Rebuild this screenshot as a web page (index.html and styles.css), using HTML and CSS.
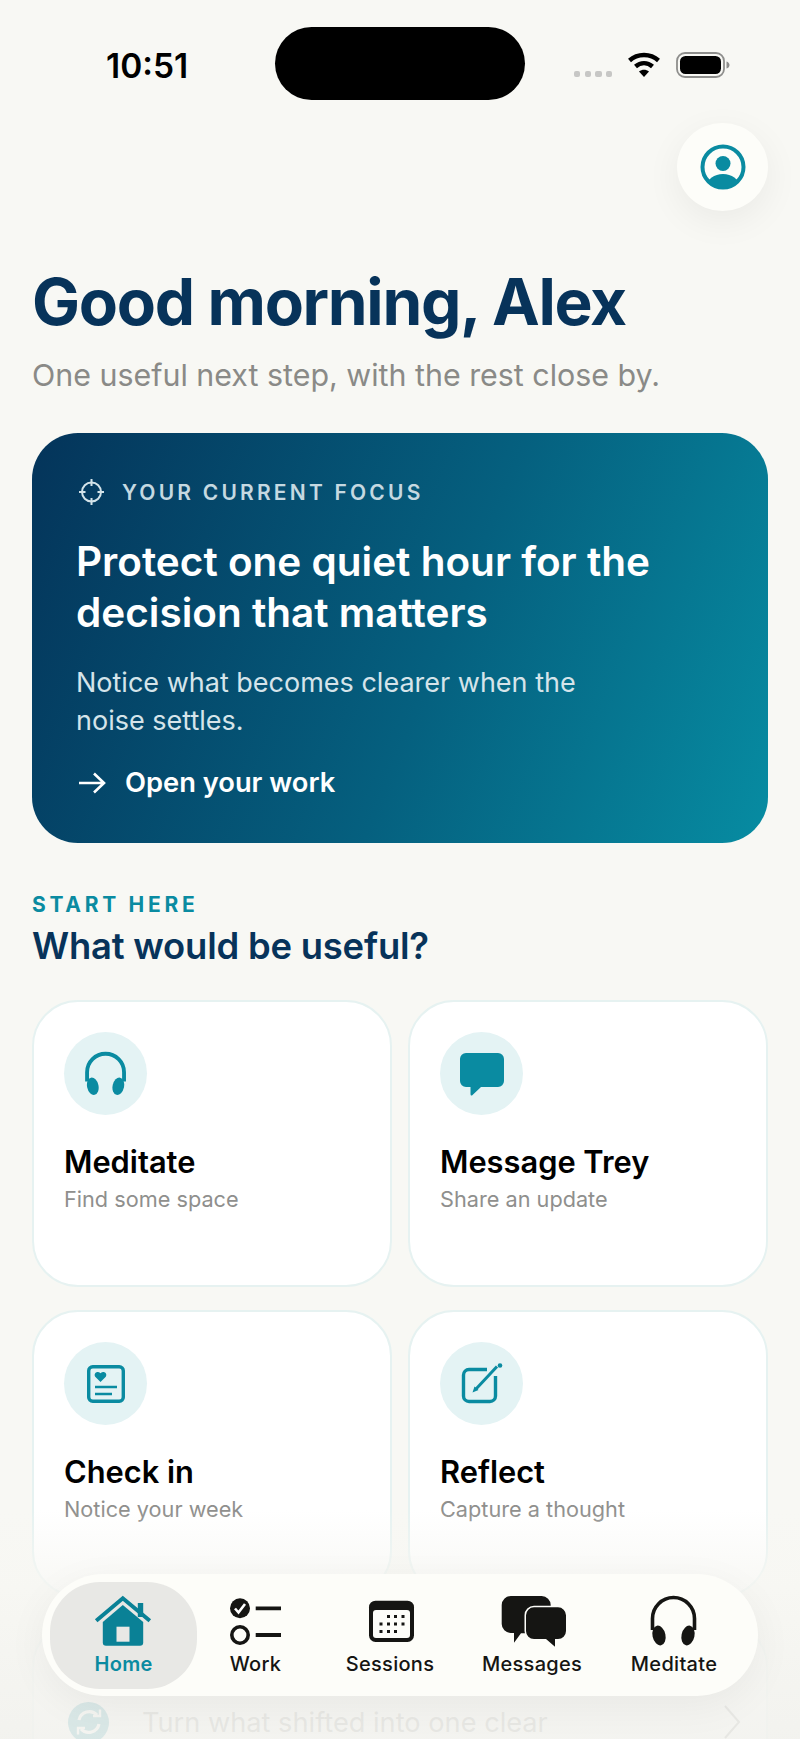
FILE: index.html
```html
<!DOCTYPE html>
<html lang="en">

<head>
    <meta charset="UTF-8">
    <meta name="viewport" content="width=device-width, initial-scale=1.0">
    <title>Home</title>
    <link rel="stylesheet" href="styles.css">
</head>

<body>
    <div class="screen">
        <header class="status">
            <div class="time">10:51</div>
            <div class="island"></div>
            <div class="status-icons">
                <div class="dots"><i></i><i></i><i></i><i></i></div>
                <svg class="wifi" width="34" height="26" viewBox="0 0 34 26">
                    <path d="M2.5 8.5C10.5 1.2 23.5 1.2 31.5 8.5" fill="none" stroke="#000" stroke-width="4.4" />
                    <path d="M8.5 14.5C13.5 10 20.5 10 25.5 14.5" fill="none" stroke="#000" stroke-width="4.4" />
                    <path d="M12 19.5C15 17 19 17 22 19.5L17 25Z" fill="#000" />
                </svg>
                <svg class="battery" width="54" height="26" viewBox="0 0 54 26">
                    <rect x="1" y="1" width="47" height="24" rx="8" fill="none" stroke="#8e8e8c" stroke-width="1.8" />
                    <rect x="4" y="4" width="41" height="18" rx="5.5" fill="#000" />
                    <path d="M50.5 9.5C52.5 10 53.5 11.5 53.5 13S52.5 16 50.5 16.5Z" fill="#8e8e8c" />
                </svg>
            </div>
        </header>

        <div class="topbar">
            <button class="profile">
                <svg width="46" height="46" viewBox="0 0 46 46">
                    <defs>
                        <clipPath id="ring"><circle cx="23" cy="23" r="21" /></clipPath>
                    </defs>
                    <circle cx="23" cy="23" r="20.5" fill="none" stroke="#0a8ba1" stroke-width="4" />
                    <circle cx="23" cy="19.5" r="7.5" fill="#0a8ba1" />
                    <ellipse cx="23" cy="42" rx="16" ry="12" fill="#0a8ba1" clip-path="url(#ring)" />
                </svg>
            </button>
        </div>

        <main class="content">
            <h1>Good morning, Alex</h1>
            <p class="lead">One useful next step, with the rest close by.</p>

            <section class="hero">
                <div class="hero-label">
                    <svg width="27" height="28" viewBox="0 0 27 28" fill="none" stroke="#d3e3e9" stroke-width="2">
                        <circle cx="13.5" cy="14" r="9.5" />
                        <path d="M13.5 1V8M13.5 20V27M1 14H7.5M19.5 14H26" />
                    </svg>
                    <span>YOUR CURRENT FOCUS</span>
                </div>
                <h2>Protect one quiet hour for the decision that matters</h2>
                <p>Notice what becomes clearer when the noise settles.</p>
                <div class="hero-link">
                    <svg width="28" height="24" viewBox="0 0 28 24" fill="none" stroke="#fff" stroke-width="2.6">
                        <path d="M1 12H26M16 2.5L26 12L16 21.5" />
                    </svg>
                    <span>Open your work</span>
                </div>
            </section>

            <div class="eyebrow">START HERE</div>
            <h3>What would be useful?</h3>

            <div class="cards">
                <div class="card">
                    <div class="card-icon">
                        <svg width="44" height="45" viewBox="0 0 50 50" fill="#0a8ba1">
                            <path d="M3.5 34V23.5a21 21 0 0 1 42 0V34" fill="none" stroke="#0a8ba1" stroke-width="4.4" />
                            <ellipse cx="10" cy="39.5" rx="6.5" ry="10" transform="rotate(-12 10 39.5)" />
                            <ellipse cx="39" cy="39.5" rx="6.5" ry="10" transform="rotate(12 39 39.5)" />
                        </svg>
                    </div>
                    <div class="card-title">Meditate</div>
                    <div class="card-sub">Find some space</div>
                </div>
                <div class="card">
                    <div class="card-icon">
                        <svg width="46" height="44" viewBox="0 0 46 44" fill="#0a8ba1">
                            <path d="M7 1H39A6 6 0 0 1 45 7V29A6 6 0 0 1 39 35H22L13 43.5Q11.5 44 11.5 42V35H7A6 6 0 0 1 1 29V7A6 6 0 0 1 7 1Z" />
                        </svg>
                    </div>
                    <div class="card-title">Message Trey</div>
                    <div class="card-sub">Share an update</div>
                </div>
                <div class="card">
                    <div class="card-icon">
                        <svg width="38" height="38" viewBox="0 0 38 38" fill="none" stroke="#0a8ba1" stroke-width="3.4">
                            <rect x="1.7" y="1.7" width="34.6" height="34.6" rx="4" />
                            <path d="M8 22H30M8 29H25" stroke-width="2.6" />
                            <path d="M13.5 17L8.2 11.8C6.2 8.5 10.3 5.3 13.5 8.3C16.7 5.3 20.8 8.5 18.8 11.8Z" fill="#0a8ba1" stroke="none" />
                        </svg>
                    </div>
                    <div class="card-title">Check in</div>
                    <div class="card-sub">Notice your week</div>
                </div>
                <div class="card">
                    <div class="card-icon">
                        <svg width="42" height="42" viewBox="0 0 42 42" fill="none" stroke="#0a8ba1" stroke-width="3.4">
                            <path d="M26 6.5H8A5.5 5.5 0 0 0 2.5 12V33A5.5 5.5 0 0 0 8 38.5H29A5.5 5.5 0 0 0 34.5 33V13" />
                            <path d="M15 26L36 3.5" stroke-width="3" />
                            <path d="M11.5 29.5L13.5 23.5L17.5 27Z" fill="#0a8ba1" stroke="none" />
                            <circle cx="39" cy="2.5" r="2.3" fill="#0a8ba1" stroke="none" />
                        </svg>
                    </div>
                    <div class="card-title">Reflect</div>
                    <div class="card-sub">Capture a thought</div>
                </div>
            </div>

            <div class="card-wide">
                <div class="wide-icon">
                    <svg width="28" height="28" viewBox="0 0 28 28" fill="none" stroke="#fff" stroke-width="3.2">
                        <path d="M4 12A10.5 10.5 0 0 1 22 7M24 16A10.5 10.5 0 0 1 6 21" />
                        <path d="M18 8H25V1.5M10 20H3V26.5" stroke-width="2.4" />
                    </svg>
                </div>
                <span>Turn what shifted into one clear</span>
                <svg class="chevron" width="20" height="36" viewBox="0 0 20 36" fill="none" stroke="#8a8a88" stroke-width="2">
                    <path d="M3 2L17 18L3 34" />
                </svg>
            </div>
        </main>

        <div class="fade"></div>

        <nav class="tabbar">
            <div class="tab tab-active">
                <svg width="60" height="54" viewBox="1.5 0 60 54">
                    <path d="M45.3 8H50.7V22H45.3Z" fill="#0a8196" />
                    <path d="M30.3 10L50.7 27V47.5A3.2 3.2 0 0 1 47.5 50.7H13.5A3.2 3.2 0 0 1 10.3 47.5V27Z" fill="#0a8196" />
                    <path d="M3.7 25.7L30.3 3.3L57.3 25.7" fill="none" stroke="#0a8196" stroke-width="4" />
                    <rect x="24" y="31.7" width="13" height="15" fill="#e8e8e5" />
                </svg>
                <span>Home</span>
            </div>
            <div class="tab">
                <svg width="56" height="54" viewBox="0 0 56 54">
                    <circle cx="12" cy="13.3" r="10" fill="#151513" />
                    <path d="M7 13.5L10.5 17.5L17 9" fill="none" stroke="#fff" stroke-width="2.6" />
                    <path d="M27.7 13.3H53M27.7 40H53" stroke="#151513" stroke-width="3.8" />
                    <circle cx="12" cy="40" r="8.2" fill="none" stroke="#151513" stroke-width="3.6" />
                </svg>
                <span>Work</span>
            </div>
            <div class="tab">
                <svg width="49" height="54" viewBox="-1 0 49 54">
                    <rect x="2" y="5.7" width="45" height="41.3" rx="6.5" fill="#151513" />
                    <rect x="6" y="15" width="37" height="28" rx="3" fill="#fdfdf9" />
                    <g fill="#151513">
                        <rect x="20" y="20" width="3" height="3" />
                        <rect x="27" y="20" width="3" height="3" />
                        <rect x="34.5" y="20" width="3" height="3" />
                        <rect x="12.5" y="27.5" width="3" height="3" />
                        <rect x="20" y="27.5" width="3" height="3" />
                        <rect x="27" y="27.5" width="3" height="3" />
                        <rect x="34.5" y="27.5" width="3" height="3" />
                        <rect x="12.5" y="35" width="3" height="3" />
                        <rect x="20" y="35" width="3" height="3" />
                        <rect x="27" y="35" width="3" height="3" />
                    </g>
                </svg>
                <span>Sessions</span>
            </div>
            <div class="tab">
                <svg width="68" height="54" viewBox="-2 0 68 54">
                    <path d="M10.7 1H41.7A9 9 0 0 1 50.7 10V29.3A9 9 0 0 1 41.7 38.3H21L14 47.7V38H10.7A9 9 0 0 1 1.7 29V10A9 9 0 0 1 10.7 1Z" fill="#151513" />
                    <path d="M34 12.3H58A8 8 0 0 1 66 20.3V36A8 8 0 0 1 58 44H55V51.7L46 44H34A8 8 0 0 1 26 36V20.3A8 8 0 0 1 34 12.3Z" fill="#151513" stroke="#fdfdf9" stroke-width="3" paint-order="stroke" />
                </svg>
                <span>Messages</span>
            </div>
            <div class="tab">
                <svg width="50" height="54" viewBox="0 0 50 54" fill="#151513">
                    <path d="M3.5 35V23.5a21 21 0 0 1 42 0V35" fill="none" stroke="#151513" stroke-width="3.6" />
                    <ellipse cx="10" cy="40.5" rx="6.5" ry="10" transform="rotate(-12 10 40.5)" />
                    <ellipse cx="39" cy="40.5" rx="6.5" ry="10" transform="rotate(12 39 40.5)" />
                </svg>
                <span>Meditate</span>
            </div>
        </nav>
    </div>
</body>

</html>
```

FILE: styles.css
```css
* {
    box-sizing: border-box;
}

body {
    margin: 0;
    font-family: "Inter", "Liberation Sans", sans-serif;
}

.screen {
    position: relative;
    width: 800px;
    height: 1739px;
    overflow: hidden;
    background: #f8f8f4;
}

/* status bar */
.status {
    display: grid;
    grid-template-columns: 275px 250px 1fr;
    padding-top: 27px;
}

.time {
    padding: 19px 0 0 106px;
    font-size: 33.5px;
    line-height: 40px;
    font-weight: 600;
    color: #000;
}

.island {
    height: 73px;
    background: #000;
    border-radius: 37px;
}

.status-icons {
    display: flex;
    align-items: flex-start;
    padding: 25px 0 0 49px;
}

.dots {
    display: flex;
    gap: 4.3px;
    margin-top: 18.7px;
}

.dots i {
    width: 6.4px;
    height: 6.4px;
    border-radius: 2px;
    background: #c7c7c5;
}

.wifi {
    margin-left: 15px;
}

.battery {
    margin-left: 15px;
}

/* profile */
.topbar {
    display: flex;
    justify-content: flex-end;
    margin-top: 23px;
    padding-right: 32px;
}

.profile {
    display: flex;
    align-items: center;
    justify-content: center;
    width: 91px;
    height: 88px;
    padding: 0;
    border: 0;
    border-radius: 50%;
    background: #fdfdf9;
    box-shadow: 0 10px 36px rgba(0, 0, 0, .06);
}

.content {
    padding: 0 32px;
}

h1 {
    margin: 55px 0 0;
    font-size: 64px;
    line-height: 72px;
    font-weight: 700;
    letter-spacing: -1.3px;
    color: #07335a;
}

.lead {
    margin: 18px 0 0;
    font-size: 30.4px;
    line-height: 38px;
    color: #8a8a87;
}

/* focus card */
.hero {
    height: 410px;
    margin-top: 39px;
    padding: 45px 60px 0 44px;
    border-radius: 46px;
    background: linear-gradient(112deg, #04345a 0%, #05607f 55%, #078ca2 100%);
    color: #fff;
}

.hero-label {
    display: flex;
    align-items: center;
    gap: 17px;
    margin-left: 2px;
    height: 28px;
    font-size: 21px;
    font-weight: 600;
    letter-spacing: 3.2px;
    color: #c5d9e1;
}

.hero h2 {
    margin: 30px 0 0;
    font-size: 40.5px;
    line-height: 51px;
    font-weight: 600;
}

.hero p {
    width: 560px;
    margin: 26px 0 0;
    font-size: 27px;
    line-height: 38px;
    color: #d5e4ea;
}

.hero-link {
    display: flex;
    align-items: center;
    gap: 19px;
    margin: 24px 0 0 2px;
    font-size: 27.3px;
    line-height: 38px;
    font-weight: 600;
}

.eyebrow {
    margin-top: 48px;
    font-size: 21px;
    line-height: 28px;
    font-weight: 700;
    letter-spacing: 3.7px;
    color: #0a8ba1;
}

h3 {
    margin: 4px 0 0;
    font-size: 36.4px;
    line-height: 46px;
    font-weight: 600;
    letter-spacing: -.2px;
    color: #07335a;
}

/* shortcuts */
.cards {
    display: grid;
    grid-template-columns: 360px 360px;
    grid-auto-rows: 287px;
    column-gap: 16px;
    row-gap: 23px;
    margin-top: 31px;
}

.card {
    padding: 30px 30px 0;
    background: #fff;
    border: 2px solid #e6f2f1;
    border-radius: 46px;
}

.card-icon {
    display: flex;
    align-items: center;
    justify-content: center;
    width: 83px;
    height: 83px;
    border-radius: 50%;
    background: #e4f3f4;
}

.card-title {
    margin-top: 27px;
    font-size: 30.8px;
    line-height: 40px;
    font-weight: 600;
    color: #000;
}

.card-sub {
    margin-top: 2px;
    font-size: 21.7px;
    line-height: 30px;
    color: #8f8f8d;
}

.card-wide {
    display: flex;
    align-items: center;
    margin-top: 24px;
    height: 202px;
    padding: 0 24px 0 34px;
    background: #fff;
    border: 2px solid #e6f2f1;
    border-radius: 46px;
    font-size: 27.2px;
    color: #8a8a88;
}

.wide-icon {
    display: flex;
    align-items: center;
    justify-content: center;
    flex: none;
    width: 41px;
    height: 41px;
    margin-right: 33px;
    border-radius: 50%;
    background: #0a8ba1;
}

.chevron {
    margin-left: auto;
}

/* bottom fade + tab bar */
.fade {
    position: absolute;
    left: 0;
    right: 0;
    bottom: 0;
    height: 229px;
    background: linear-gradient(rgba(248, 248, 244, 0), rgba(247, 247, 243, .75) 30%, rgba(244, 244, 240, .89) 70%, rgba(242, 242, 238, .89));
}

.tabbar {
    position: absolute;
    left: 42px;
    top: 1574px;
    display: grid;
    grid-template-columns: 147px 117px 152px 132px 152px;
    width: 716px;
    height: 122px;
    padding: 8px;
    border-radius: 61px;
    background: #fdfdf9;
    box-shadow: 0 10px 40px rgba(0, 0, 0, .05);
}

.tab {
    display: flex;
    flex-direction: column;
    align-items: center;
    height: 107px;
    padding-top: 13px;
    font-size: 20px;
    line-height: 24px;
    font-weight: 450;
    letter-spacing: .3px;
    color: #151513;
}

.tab span {
    margin-top: 3px;
}

.tab-active {
    border-radius: 50px;
    background: #e8e8e5;
    font-weight: 600;
    color: #0a8ba1;
}
```
